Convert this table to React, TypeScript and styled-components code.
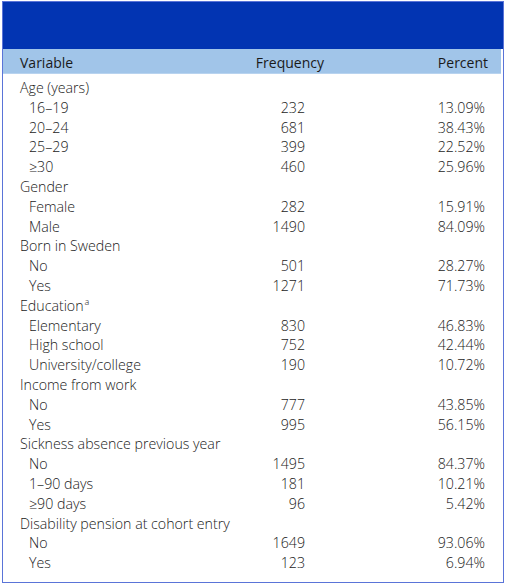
import React from "react";
import styled, { createGlobalStyle } from "styled-components";

const Global = createGlobalStyle`
  html, body { margin: 0; padding: 0; background: #ffffff; }
  body { font-family: "Open Sans", "Liberation Sans", sans-serif; color: #1a1a1a; }
`;

const Frame = styled.div`
  box-sizing: border-box;
  margin: 1px 0 0 2px;
  width: 502px;
  height: 582px;
  border: 1px solid #5a74d8;
  display: flex;
  flex-direction: column;
`;

const TitleBar = styled.div`
  height: 47px;
  background: #0234b2;
`;

const HeadRow = styled.div`
  display: grid;
  grid-template-columns: 1fr 80px 164px;
  align-items: end;
  height: 24px;
  margin-right: 2px;
  padding: 0 13px 0 17px;
  background: #a1c5e9;
  font-size: 14px;
  line-height: 20px;
  border-bottom: 1px solid #b8d3ef;
`;

const Body = styled.div`
  padding-top: 4px;
  display: flex;
  flex-direction: column;
`;

const Row = styled.div`
  display: grid;
  grid-template-columns: 1fr 80px 180px;
  height: 19.8px;
  align-items: center;
  padding: 0 18px 0 17px;
  font-size: 14.2px;
  line-height: 19.8px;
  font-weight: 300;
`;

const Label = styled.span<{ $indent?: boolean }>`
  padding-left: ${(p) => (p.$indent ? "9px" : "0")};
  white-space: nowrap;
`;

const Sup = styled.sup`
  font-size: 9px;
  line-height: 0;
  vertical-align: 0;
  position: relative;
  top: -6px;
  margin-left: 1px;
`;

const Num = styled.span`
  text-align: right;
`;

type R = [string, boolean, string?, string?];

const rows: R[] = [
  ["Age (years)", false],
  ["16–19", true, "232", "13.09%"],
  ["20–24", true, "681", "38.43%"],
  ["25–29", true, "399", "22.52%"],
  ["≥30", true, "460", "25.96%"],
  ["Gender", false],
  ["Female", true, "282", "15.91%"],
  ["Male", true, "1490", "84.09%"],
  ["Born in Sweden", false],
  ["No", true, "501", "28.27%"],
  ["Yes", true, "1271", "71.73%"],
  ["Education", false],
  ["Elementary", true, "830", "46.83%"],
  ["High school", true, "752", "42.44%"],
  ["University/college", true, "190", "10.72%"],
  ["Income from work", false],
  ["No", true, "777", "43.85%"],
  ["Yes", true, "995", "56.15%"],
  ["Sickness absence previous year", false],
  ["No", true, "1495", "84.37%"],
  ["1–90 days", true, "181", "10.21%"],
  ["≥90 days", true, "96", "5.42%"],
  ["Disability pension at cohort entry", false],
  ["No", true, "1649", "93.06%"],
  ["Yes", true, "123", "6.94%"],
];

export default function App() {
  return (
    <>
      <Global />
      <Frame>
        <TitleBar />
        <HeadRow>
          <span>Variable</span>
          <Num>Frequency</Num>
          <Num>Percent</Num>
        </HeadRow>
        <Body>
          {rows.map(([label, indent, f, p], i) => (
            <Row key={i}>
              <Label $indent={indent}>
                {label}
                {label === "Education" && <Sup>a</Sup>}
              </Label>
              <Num>{f ?? ""}</Num>
              <Num>{p ?? ""}</Num>
            </Row>
          ))}
        </Body>
      </Frame>
    </>
  );
}
